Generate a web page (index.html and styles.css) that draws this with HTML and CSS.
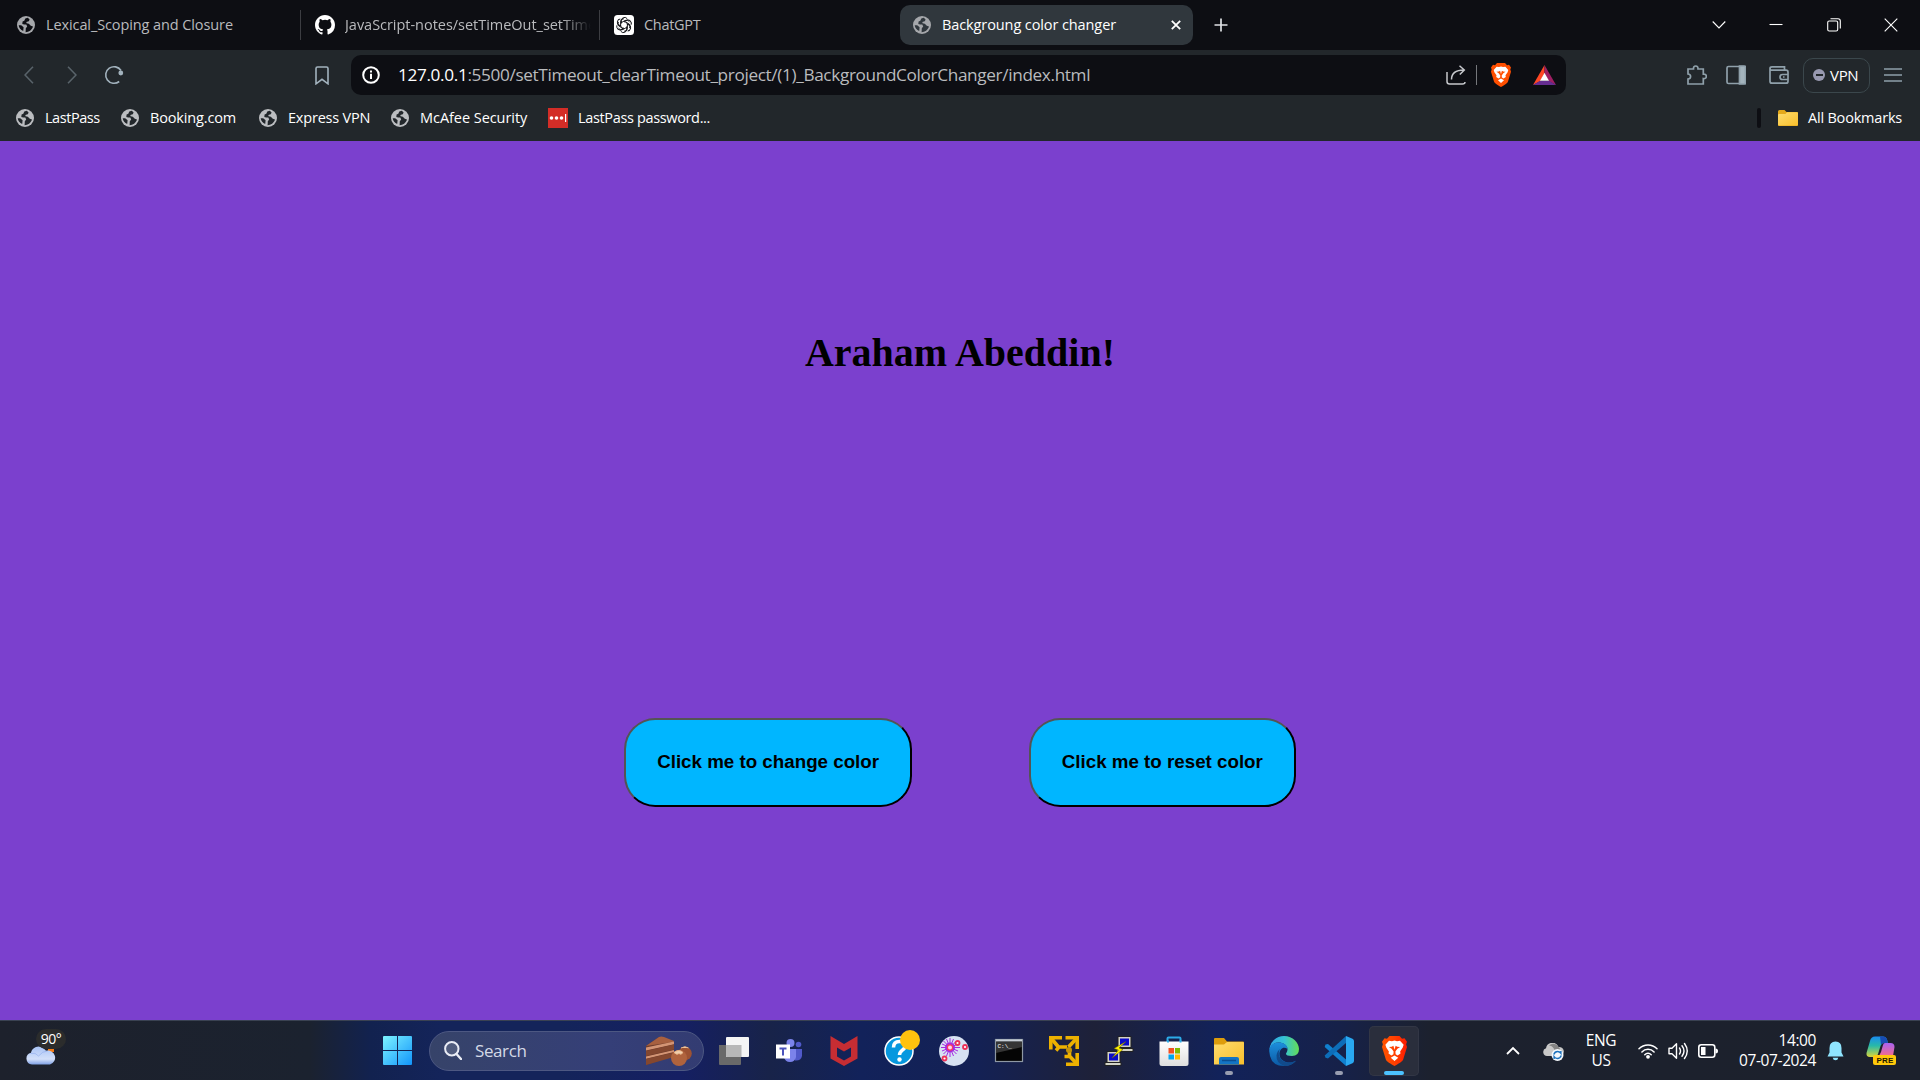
FILE: index.html
```
<!DOCTYPE html>
<html lang="en">
<head>
<meta charset="utf-8">
<title>Backgroung color changer</title>
<link rel="stylesheet" href="styles.css">
</head>
<body>
<svg class="defs" width="0" height="0" aria-hidden="true">
  <defs>
    <linearGradient id="gWin" x1="0" y1="0" x2="1" y2="1"><stop offset="0" stop-color="#7df3ff"/><stop offset="1" stop-color="#1295fb"/></linearGradient>
    <linearGradient id="gCloud" x1="0" y1="0" x2="0" y2="1"><stop offset="0" stop-color="#a9c3f5"/><stop offset=".7" stop-color="#d3e0fa"/><stop offset="1" stop-color="#7fa0e4"/></linearGradient>
    <linearGradient id="gFold" x1="0" y1="0" x2="1" y2="1"><stop offset="0" stop-color="#ffdc6e"/><stop offset="1" stop-color="#f8bf2c"/></linearGradient>
    <linearGradient id="gEdge" x1="0" y1="0" x2="1" y2="0"><stop offset="0" stop-color="#2fa5e4"/><stop offset=".5" stop-color="#35c1d6"/><stop offset="1" stop-color="#64dd55"/></linearGradient>
    <linearGradient id="gEdge2" x1="0" y1="0" x2="0" y2="1"><stop offset="0" stop-color="#1c8fdc"/><stop offset="1" stop-color="#0c59a4"/></linearGradient>
    <linearGradient id="gBrave" x1="0" y1="0" x2="1" y2="0"><stop offset="0" stop-color="#ff5500"/><stop offset=".5" stop-color="#ff4000"/><stop offset="1" stop-color="#ff1a00"/></linearGradient>
    <linearGradient id="gStore" x1="0" y1="0" x2="0" y2="1"><stop offset="0" stop-color="#fff"/><stop offset="1" stop-color="#dedede"/></linearGradient>
    <linearGradient id="gCopA" x1="0" y1="0" x2="0" y2="1"><stop offset="0" stop-color="#1a8cf0"/><stop offset=".45" stop-color="#27b9a8"/><stop offset="1" stop-color="#d9d63a"/></linearGradient>
    <linearGradient id="gCopB" x1="0" y1="0" x2="0" y2="1"><stop offset="0" stop-color="#a862f2"/><stop offset="1" stop-color="#f46d8c"/></linearGradient>
    <symbol id="globe" viewBox="0 0 18 18">
      <circle cx="9" cy="9" r="9" fill="currentColor"/>
      <path d="M10.800 1.800 8.300 2.600 7.300 4.800 5.600 5.600 5.300 8 7.200 8.600 9.300 8.500 10.200 10.500 8.800 12.300 8.600 16.200C11.500 16.300 15 14 16 10.500L13.800 9.800 11.800 7.700 9.600 7.300 9.300 6 11.800 5.300 12.600 3.400Z" fill="var(--hole)"/>
      <path d="M1.700 9.200H4.200L6.600 11.200 6.200 14.900A7.400 7.400 0 0 1 1.700 9.200Z" fill="var(--hole)"/>
    </symbol>
    <symbol id="brave" viewBox="0 0 20 24">
      <path d="M6 0h8l2 2.200 2-.4L20 4.600l-.7 2 .7 2.200-3 9.700c-.5 1.500-1.500 2.200-7 5.500-5.500-3.300-6.500-4-7-5.500L0 8.800l.7-2.200-.7-2L2 1.800l2 .4Z"/>
      <path fill="#fff" d="M5.600 3.700 8 4.100 10 3.600 12 4.100 14.400 3.700 17.300 7 16.600 9.200 14.500 12.300 14.800 13.900 12.500 15.500 10.900 14.600 10.700 12.400 12.300 10.200 14.500 8.800 12.200 8.500 10.900 7.700 10 11 9.100 7.700 7.800 8.500 5.500 8.800 7.700 10.200 9.300 12.400 9.100 14.600 7.500 15.500 5.200 13.900 5.500 12.300 3.400 9.200 2.700 7ZM10 15.500 13 17.300 10 19.900 7 17.300Z"/>
    </symbol>
  </defs>
</svg>

<header class="tabs">
  <div class="tab first"><svg class="fav"><use href="#globe"/></svg><span class="t1">Lexical_Scoping and Closure</span></div>
  <div class="tab second">
    <svg class="fav big" viewBox="0 0 16 16"><path fill="#fff" d="M8 0C3.580 0 0 3.580 0 8c0 3.540 2.290 6.530 5.470 7.590.4.070.55-.17.55-.38v-1.490c-2.010.37-2.530-.49-2.690-.94-.09-.23-.48-.94-.82-1.130-.28-.15-.68-.52-.01-.53.63-.01 1.080.58 1.230.82.72 1.210 1.870.87 2.330.66.070-.52.28-.87.51-1.070-1.780-.2-3.640-.89-3.640-3.950 0-.87.31-1.590.82-2.150-.08-.2-.36-1.020.08-2.120 0 0 .67-.21 2.200.82a7.600 7.600 0 0 1 4 0c1.530-1.040 2.200-.82 2.200-.82.44 1.100.16 1.920.08 2.120.51.56.82 1.270.82 2.150 0 3.070-1.870 3.750-3.650 3.950.29.25.54.73.54 1.480v2.200c0 .21.15.46.55.38A8 8 0 0 0 16 8c0-4.420-3.580-8-8-8Z"/></svg>
    <span class="t2">JavaScript-notes/setTimeOut_setTime</span>
  </div>
  <div class="tab third">
    <svg class="fav big" viewBox="0 0 20 20"><rect width="20" height="20" rx="3.500" fill="#fff"/><g fill="none" stroke="#15161a" stroke-width="1"><path id="pt" d="M7.400 8.500V5.600a3.200 3.200 0 0 1 5.900-1.700M7.400 7.600l3.600-2.100a3.200 3.200 0 0 1 4.400 1.300"/><use href="#pt" transform="rotate(60 10 10)"/><use href="#pt" transform="rotate(120 10 10)"/><use href="#pt" transform="rotate(180 10 10)"/><use href="#pt" transform="rotate(240 10 10)"/><use href="#pt" transform="rotate(300 10 10)"/></g></svg>
    <span class="t3">ChatGPT</span>
  </div>
  <div class="tab active"><svg class="fav"><use href="#globe"/></svg><span class="t4">Backgroung color changer</span>
    <svg class="x" viewBox="0 0 10 10"><path d="M.8.8 9.200 9.200M9.200.8.8 9.200" stroke="#fff" stroke-width="1.800"/></svg></div>
  <svg class="plus" viewBox="0 0 14 14"><path d="M7 .5v13M.5 7h13" stroke="#dfe1e5" stroke-width="1.700"/></svg>
  <div class="wincontrols">
    <svg viewBox="0 0 14 14"><path d="M.7 3.500 7 10 13.300 3.500"/></svg>
    <svg viewBox="0 0 14 14"><path d="M.5 6.500h13"/></svg>
    <svg viewBox="0 0 14 14"><rect x=".7" y="3" width="10" height="10" rx="1.500"/><path d="M3.500.8H11a2.300 2.300 0 0 1 2.300 2.300v7.400"/></svg>
    <svg viewBox="0 0 14 14"><path d="M.7.7 13.300 13.300M13.300.7.7 13.300"/></svg>
  </div>
</header>

<nav class="toolbar">
  <div class="navicons">
    <svg class="dim" viewBox="0 0 10 18"><path d="M9 .8 1 9l8 8.200"/></svg>
    <svg class="dim" viewBox="0 0 10 18"><path d="M1 .8 9 9l-8 8.200"/></svg>
    <svg class="reload" viewBox="0 0 20 20"><path d="M15.200 16.500A8.300 8.300 0 1 1 17 5.500"/><circle cx="16.800" cy="8" r="2.400" fill="#a2b2bd" stroke="none"/></svg>
    <svg class="bm" viewBox="0 0 14 19"><path d="M1 2.500Q1 1 2.500 1h9Q13 1 13 2.500v15.300l-6-4.500-6 4.500Z"/></svg>
  </div>
  <div class="url">
    <svg class="info" viewBox="0 0 18 18"><circle cx="9" cy="9" r="7.800" fill="none" stroke="#fff" stroke-width="2"/><path d="M9 7.700v5.200M9 4.500v2" stroke="#fff" stroke-width="2"/></svg>
    <span class="address"><b>127.0.0.1</b>:5500/setTimeout_clearTimeout_project/(1)_BackgroundColorChanger/index.html</span>
    <svg class="share" viewBox="0 0 20 20"><path d="M1 7v9.500Q1 19 3.500 19h13q2.500 0 2.500-2M5.500 14.500C5.500 8 10 5 18 5M13.500.8 18.300 5l-4.500 4.500" fill="none" stroke="#c6c8cc" stroke-width="1.500"/></svg>
    <i class="bar"></i>
    <svg class="lion" fill="#ff4f00"><use href="#brave"/></svg>
    <svg class="bat" viewBox="0 0 23 20"><path d="M11.500 0 0 20l7.500-4 4-8Z" fill="#ff4724"/><path d="M11.500 0 23 20l-7.500-4-4-8Z" fill="#9e1f63"/><path d="M0 20h23l-7-4.300H7Z" fill="#662d91"/><path d="m11.500 7.800 4.500 8H7Z" fill="#fff"/></svg>
  </div>
  <div class="ext">
    <svg viewBox="0 0 20 20"><path d="M1 4h5.500Q6.300 1 8.700 1T11 4h5.300v5.200q3-.2 3 2.200t-3 2.100V19H1v-5q2.600-.2 2.600-2.500T1 9Z"/></svg>
    <svg viewBox="0 0 20 20"><rect x="1" y="1.500" width="18" height="17" rx="1.500"/><path d="M13.500 1h5q1 0 1 1v16q0 1-1 1h-5Z" fill="#a3b3bc"/></svg>
    <svg viewBox="0 0 20 20"><path d="M1 3.500Q1 1.800 3 1.800h12.500v3M1 3.500Q1 5.200 3 5.200h14q2 0 2 2v9q0 2-2 2H3q-2 0-2-2ZM19 9.500h-5.500a2.500 2.500 0 0 0 0 5H19M14 12h1.500"/></svg>
    <div class="vpn"><i></i><span>VPN</span></div>
    <svg class="menu" viewBox="0 0 18 14"><path d="M0 1h18M0 7h18M0 13h18"/></svg>
  </div>
</nav>

<nav class="bookmarks">
  <div class="b b1"><svg class="fav"><use href="#globe"/></svg><span>LastPass</span></div>
  <div class="b b2"><svg class="fav"><use href="#globe"/></svg><span>Booking.com</span></div>
  <div class="b b3"><svg class="fav"><use href="#globe"/></svg><span>Express VPN</span></div>
  <div class="b b4"><svg class="fav"><use href="#globe"/></svg><span>McAfee Security</span></div>
  <div class="b b5"><svg class="fav big" viewBox="0 0 20 20"><path fill="#d32d27" d="M0 0h20v20H0z"/><g fill="#fff"><circle cx="3.500" cy="10" r="1.800"/><circle cx="8.500" cy="10" r="1.800"/><circle cx="13.500" cy="10" r="1.800"/><path d="M17 6h1.200v8H17z"/></g></svg><span>LastPass password...</span></div>
  <div class="all"><i></i><svg viewBox="0 0 20 16"><path d="M0 1.500Q0 0 1.500 0h5l2 2H19q1 0 1 1v12q0 1-1 1H1q-1 0-1-1Z" fill="#e5a91a"/><path d="M1 4h6.500L9 2.300h10q1 0 1 1V14.500q0 1-1 1H1q-1 0-1-1V5q0-1 1-1Z" fill="url(#gFold)"/></svg><span>All Bookmarks</span></div>
</nav>

<main class="page">
  <h1>Araham Abeddin!</h1>
  <div class="buttons">
    <button type="button">Click me to change color</button>
    <button type="button">Click me to reset color</button>
  </div>
</main>

<footer class="taskbar">
  <div class="weather">
    <svg viewBox="0 0 30 20"><path d="M22 2h6v5h-6Z" fill="#f57b16"/><path d="M6 19.500a6 6 0 0 1-1-11.800A7.500 7.500 0 0 1 17.500 3.500Q19.500 5 20 5.800a7 7 0 1 1 4 13.700Z" fill="url(#gCloud)"/><path d="M4.500 8.500q5-1.500 8 2.500 4-5 9-5" fill="none" stroke="#8facec" stroke-width="1" opacity=".6"/></svg>
    <span>90°</span>
  </div>
  <div class="dock">
    <svg class="start" viewBox="0 0 29 29"><path fill="url(#gWin)" d="M0 1q0-1 1-1h13v14H0ZM15 0h13q1 0 1 1v13H15ZM0 15h14v14H1q-1 0-1-1ZM15 15h14v13q0 1-1 1H15Z"/></svg>
    <div class="search">
      <svg class="mag" viewBox="0 0 18 19"><circle cx="7.800" cy="7.800" r="6.700" fill="#ffffff22" stroke="#e9ecf5" stroke-width="2"/><path d="m12.500 13 4.500 5" stroke="#e9ecf5" stroke-width="2.400" stroke-linecap="round"/></svg>
      <span>Search</span>
      <svg class="cake" viewBox="0 0 46 30"><path d="M0 10 13 1l15 4v15L0 29Z" fill="#6f3c2b"/><path d="M0 10 13 1q2-1 5 0l10 4-1 1Z" fill="#a8603f"/><path d="M0 11.500 28 5.500v2.800L0 14.500ZM0 20.500l28-6.500v2L0 22.700Z" fill="#d39474"/><path d="M0 15v5l28-6.500v-5ZM0 23v6l28-8v-4.500Z" fill="#84472f"/><circle cx="39" cy="17.500" r="6.800" fill="#9d5232"/><circle cx="33" cy="22" r="8" fill="#b0633d"/><path d="M28 16.500q5-4 9 0-2 3-4 1-2 2-5-1ZM35 12q4-2.500 7.500 0" fill="#f0cfad" stroke="#e9b68a"/></svg>
    </div>
    <div class="apps">
      <div><svg viewBox="0 0 30 30"><path d="M0 9h22v19q0 1-1 1H1q-1 0-1-1Z" fill="#696969"/><path d="M8 1h21q1 0 1 1v18q0 1-1 1H8q-1 0-1-1V2q0-1 1-1Z" fill="#f5f5f5"/><path d="M7 9h15.500v12H8q-1 0-1-1Z" fill="#b8b8b8"/></svg></div>
      <div><svg viewBox="0 0 30 30"><circle cx="16.500" cy="7" r="4" fill="#7b83eb"/><circle cx="24.500" cy="8.500" r="2.800" fill="#5059c9"/><path d="M21 13h7v7q-1 5-7 4.500Z" fill="#5059c9"/><path d="M10 13h12v8q-1 5-6 5t-6-5Z" fill="#7b83eb"/><rect x="2" y="8.500" width="14" height="14" fill="#fff"/><path d="M5.500 11.500h7v2H10v6H8v-6H5.500Z" fill="#4b53bc"/></svg></div>
      <div><svg viewBox="0 0 30 30"><path d="m1.500 0 13.500 8L28.500 0v22.500L15 30 1.500 22.500ZM8 11.500v9l7 4 7-4v-9l-7 4Z" fill="#c62d33" fill-rule="evenodd"/></svg></div>
      <div class="help"><svg viewBox="0 0 30 30"><circle cx="15" cy="15" r="14" fill="#0798df" stroke="#fff" stroke-width="1.500"/><path d="M9.500 11.500q0-6 6-6c5 0 6.500 3.500 5 6.500-1.500 2.500-5 2.800-5 7" fill="none" stroke="#fff" stroke-width="3.500"/><circle cx="15.500" cy="23.500" r="2.200" fill="#fff"/></svg><i></i></div>
      <div><svg viewBox="0 0 30 30"><circle cx="15" cy="15" r="15" fill="#d7e2f2"/><path d="M11 2v19M2 11.500h19M4.500 5l13 13M17.500 5l-13 13M7.500 3l7 17M14.500 3l-7 17M3 8l16 7M3 15l16-7" stroke="#a42be0" stroke-width="1"/><circle cx="11" cy="11.500" r="5" fill="#a42be0"/><circle cx="11" cy="11.500" r="2.600" fill="#fbd6ec" stroke="#ff385c" stroke-width="1.200"/><g fill="#fff" stroke="#ed3157" stroke-width="1.800"><circle cx="18.500" cy="7" r="2"/><circle cx="26" cy="11" r="2"/><circle cx="5.500" cy="22.500" r="2"/></g></svg></div>
      <div><svg viewBox="0 0 30 30"><rect x="1.500" y="3.500" width="27" height="22" fill="#050505" stroke="#8e98a4" stroke-width="1.200"/><path d="M2 4.500h26" stroke="#c9d0d8" stroke-width="2"/><path d="M2 6h26v5L2 17Z" fill="#353535"/><text x="3.500" y="12" font-family="Liberation Mono" font-size="6" fill="#fff">C:\_</text></svg></div>
      <div><svg viewBox="0 0 30 30"><g fill="none" stroke="#edb100" stroke-width="3.600"><path d="M1.800 13.500V1.800H13M16.500 1.800h11.700V13M28.200 17v11.200H17"/><path d="m2 2 7 8.500M28 2l-8.500 9M28 28l-8-8.500M7 14.500l3-3.500h8M20.500 14v6.500H15.500"/></g><circle cx="20" cy="14" r="3" fill="#c3930a"/></svg></div>
      <div><svg viewBox="0 0 30 30"><g stroke="#222" fill="#d2d2c6"><path d="M14 .5h13v11H14Z"/><path d="M13 12.500h16v3H13Z"/><path d="M3 15.500h13v11H3Z"/><path d="M1 26.500h16v3H1Z"/></g><path d="M16 2.500h9v7h-9ZM5 17.500h9v7H5Z" fill="#0a0aca"/><path d="M22 5.500 10 12.500l4.500 1.500L8 22l11-8.500-4-1.500Z" fill="#fff200" stroke="#665c00" stroke-width=".5"/></svg></div>
      <div><svg viewBox="0 0 30 30"><path d="M8.500 7V2.500q0-1 1-1h11q1 0 1 1V7" fill="none" stroke="#2cabe8" stroke-width="2"/><path d="M.5 5.500h29v22q0 2.500-2.500 2.500H3Q.5 30 .5 27.500Z" fill="url(#gStore)"/><path d="M8 5.500h2M20.500 5.500h2" stroke="#2cabe8" stroke-width="2"/><path d="M9.500 12H15v5.500H9.500Z" fill="#f25022"/><path d="M16 12h5v5.500h-5Z" fill="#7fba00"/><path d="M9.500 18.500H15v5H9.500Z" fill="#00a4ef"/><path d="M16 18.500h5v5h-5Z" fill="#ffb900"/></svg></div>
      <div class="run"><svg viewBox="0 0 30 30"><path d="M0 3q0-1 1-1h9l3 3.500H29q1 0 1 1V28H0Z" fill="#dd9c0c"/><path d="M0 8.500h10L13 6h16q1 0 1 1v21.500H0Z" fill="url(#gFold)"/><path d="M5 28.500V23q0-2 2-2h16q2 0 2 2v5.500Z" fill="#1475c4"/><path d="M8 24.500h14" stroke="#0b4f92" stroke-width="1.500"/></svg></div>
      <div><svg viewBox="0 0 30 30"><path d="M.3 14A14.800 14.800 0 0 1 15 0C24 0 30 7 30 13q0 7-7 7-6 0-6-2.200c0-1 1.500-1.800 1.500-4.500C18.500 9 14 6.500 9.500 6.500Q3 6.500.3 14Z" fill="url(#gEdge)"/><path d="M.2 15C.5 9 5 6.500 9.500 6.500c5 0 9 2.500 9 6.500-4-3-8 0-8 5 0 6 6 9 11 8.500 2.500-.2 4-1 5.500-1.800Q22.500 30 15 30 1 30 .2 15Z" fill="url(#gEdge2)"/><path d="M11 13c-3 4-.5 11 5 13 4 1.300 8 .3 11-1.300Q22.500 30 15.500 30 7 27 7.500 19.500 8 15 11 13Z" fill="#114a8b"/></svg></div>
      <div class="run"><svg viewBox="0 0 30 30"><path d="M1.500 8.500 4 8l18 15.500V30L.7 11Z" fill="#1080cf"/><path d="M.7 19.500 22 0v7L4 22.500l-2.500-.7Z" fill="#0d6db8"/><path d="m22 0 6.500 2.800Q30 3.500 30 5v20q0 1.500-1.500 2.200L22 30Z" fill="#29a8f1"/></svg></div>
      <div class="run current"><svg class="lionbig" viewBox="0 0 20 24" fill="url(#gBrave)"><use href="#brave" width="20" height="24"/></svg></div>
    </div>
  </div>
  <div class="tray">
    <svg class="up" viewBox="0 0 14 9"><path d="m1 8 6-6 6 6" fill="none" stroke="#fff" stroke-width="1.800"/></svg>
    <svg class="sync" viewBox="0 0 21 18"><path d="M4 13a4 4 0 0 1-1-7.800A6.500 6.500 0 0 1 15.500 4 4.500 4.500 0 0 1 17 13Z" fill="#c8c8c8"/><path d="M6 2.500a6 6 0 0 1 9.500 1.500q2 .5 1.500 5H12Q11 3 6 2.500Z" fill="#858585"/><circle cx="14.500" cy="12" r="6" fill="#f4f8fc"/><path d="M10.800 11.500q1-3 3.800-3 2 0 3.300 1.800V8M18.200 12.500q-1 3-3.800 3-2 0-3.300-1.800V16" fill="none" stroke="#1b71bd" stroke-width="1.400"/></svg>
    <div class="lang">ENG<br>US</div>
    <svg class="wifi" viewBox="0 0 20 16"><g fill="none" stroke="#fff" stroke-width="1.500" stroke-linecap="round"><path d="M1 5.800a12.500 12.500 0 0 1 18 0M3.900 8.900a8.500 8.500 0 0 1 12.200 0M6.800 11.700a4.500 4.500 0 0 1 6.400 0"/></g><circle cx="10" cy="13.800" r="1.900" fill="#fff"/></svg>
    <svg class="vol" viewBox="0 0 20 18"><path d="M1 6.200h3L8.500 1.800v14.400L4 11.800H1ZM11.500 6q2 3 0 6M14 3.800q4 5.200 0 10.400M16.500 1.500q5.500 7.500 0 15" fill="none" stroke="#fff" stroke-width="1.400" stroke-linejoin="round" stroke-linecap="round"/></svg>
    <svg class="batt" viewBox="0 0 20 14"><rect x=".8" y=".8" width="16" height="12.400" rx="2.500" fill="none" stroke="#fff" stroke-width="1.600"/><path d="M3 3h4.500v8H3ZM17.500 4.500Q20 4.500 20 7t-2.500 2.500Z" fill="#fff"/></svg>
    <div class="clock">14:00<br>07-07-2024</div>
    <svg class="bell" viewBox="0 0 17 20"><path d="M8.500.5q6 0 6 6.500v4.500l2 4H.5l2-4V7q0-6.500 6-6.500ZM5.700 16.800h5.600q-.5 2.500-2.800 2.500t-2.800-2.500Z" fill="#8fe5ff"/></svg>
    <svg class="copilot" viewBox="0 0 30 29"><path d="M4 5q1-4.500 5-4.500h8q3 0 4 3l1 3.500h-4q-2.500 0-3.500 3l-2.500 8Q11 21 8 21H4q-4 0-3.500-4Z" fill="url(#gCopA)"/><path d="M14 .5h3q3 0 4 3l1 3.500h-4q-2 0-3 2Z" fill="#174cb4"/><path d="M19 7h5.500q4 0 4 4L27 20H12q2-1 3-4l2-7Q17.500 7 19 7Z" fill="url(#gCopB)"/><rect x="7" y="19" width="23" height="10" rx="2" fill="#ffc80a"/><text x="10.500" y="27" font-family="Liberation Sans" font-weight="700" font-size="8" letter-spacing=".2" fill="#201800">PRE</text></svg>
  </div>
</footer>
</body>
</html>
```
FILE: styles.css
```
* { box-sizing: border-box; }
html, body { margin: 0; height: 100%; }
body {
  display: flex; flex-direction: column; height: 1080px; overflow: hidden;
  font-family: "Open Sans", "Noto Sans", sans-serif; color: #fff; background: #7b40ce;
}
svg { display: block; flex: none; }
.defs { position: absolute; }
span { white-space: nowrap; }

/* tab strip */
.tabs { flex: none; height: 50px; background: #0d0e13; display: flex; align-items: center; font-size: 14.500px; color: #b9babd; --hole: #0d0e13; }
.tab { display: flex; align-items: center; height: 30px; line-height: 30px; }
.fav { width: 18px; height: 18px; color: #a5a7ab; }
.fav.big { width: 20px; height: 20px; }
.first { width: 301px; padding-left: 17px; gap: 11px; border-right: 1px solid #3c3d42; }
.second { width: 299px; padding: 0 8px 0 14px; gap: 10px; border-right: 1px solid #3c3d42; }
.t2 { width: 246px; overflow: hidden; -webkit-mask-image: linear-gradient(90deg, #000 88%, transparent); mask-image: linear-gradient(90deg, #000 88%, transparent); }
.third { width: 300px; padding-left: 14px; gap: 10px; }
.active { width: 293px; height: 40px; padding: 0 12px 0 13px; gap: 11px; border-radius: 10px; background: #30373d; color: #fff; --hole: #30373d; }
.x { width: 10px; height: 10px; margin-left: auto; }
.plus { width: 14px; height: 14px; margin-left: 21px; }
.t1, .t4 { letter-spacing: -.1px; }
.t2 { letter-spacing: -.03px; }
.t3 { letter-spacing: -.3px; }
.wincontrols { margin-left: auto; margin-right: 22px; display: flex; gap: 43.500px; }
.wincontrols svg { width: 14px; height: 14px; fill: none; stroke: #fff; stroke-width: 1.100; }

/* address row */
.toolbar { flex: none; height: 50px; background: #22272b; display: flex; align-items: center; }
.navicons { width: 351px; padding-left: 24px; display: flex; align-items: center; }
.navicons svg { fill: none; stroke: #a2b2bd; stroke-width: 1.600; width: 10px; height: 18px; }
.navicons .dim { stroke: #59636a; margin-right: 33px; }
.navicons .dim + .dim { margin-right: 27px; }
.navicons .reload { width: 20px; height: 20px; }
.navicons .bm { width: 14px; height: 19px; margin-left: 191px; }
.url { width: 1215px; height: 40px; border-radius: 10px; background: #0d0e13; display: flex; align-items: center; padding: 0 10px 0 11px; }
.info { width: 18px; height: 18px; margin-right: 18px; }
.address { flex: 1; font-size: 17.200px; letter-spacing: -.35px; color: #babbbe; line-height: 40px; }
.address b { font-weight: 400; color: #fff; }
.share { width: 20px; height: 20px; }
.bar { width: 1px; height: 20px; margin: 0 14px 0 10px; background: #75777b; }
.lion { width: 20px; height: 24px; }
.bat { width: 23px; height: 20px; margin-left: 22px; }
.ext { flex: 1; padding: 0 18px 0 121px; display: flex; align-items: center; }
.ext > svg { width: 20px; height: 20px; margin-right: 19px; fill: none; stroke: #8fa0aa; stroke-width: 1.700; }
.ext > svg:nth-of-type(2) { margin-right: 23px; }
.ext > svg:nth-of-type(3) { margin-right: 14px; }
.ext .menu { width: 18px; height: 14px; margin: 0 0 0 auto; }
.vpn { width: 67px; height: 35px; border: 1px solid #3b474c; border-radius: 10px; display: flex; align-items: center; gap: 5px; padding-left: 9px; font-size: 15px; letter-spacing: -.3px; }
.vpn i { width: 12px; height: 12px; border-radius: 50%; background: linear-gradient(#22272b, #22272b) center / 7px 2px no-repeat #9899b0; }

/* bookmarks row */
.bookmarks { flex: none; height: 41px; padding: 0 17px 5px 16px; background: #22272b; display: flex; align-items: center; font-size: 14.500px; letter-spacing: -.15px; --hole: #22272b; }
.bookmarks span { margin-top: -2px; }
.bookmarks .fav { color: #bbbdc0; }
.b { display: flex; align-items: center; gap: 11px; }
.b1 { width: 105px; letter-spacing: -.45px; }
.b2 { width: 138px; }
.b3 { width: 132px; letter-spacing: -.2px; }
.b4 { width: 157px; letter-spacing: -.05px; }
.b5 { gap: 10px; letter-spacing: -.35px; }
.all { margin-left: auto; width: 146px; display: flex; align-items: center; letter-spacing: -.2px; }
.all i { width: 4px; height: 20px; border-radius: 2px; background: #0d0e13; margin-right: 17px; }
.all svg { width: 20px; height: 16px; margin-right: 10px; }

/* document */
.page { flex: 1; min-height: 0; display: flex; flex-direction: column; align-items: center; background: #7b40ce; color: #000; }
h1 { margin: 189px 0 0; font: bold 40px/46px "Liberation Serif", "Times New Roman", serif; }
.buttons { display: flex; gap: 116.200px; margin-top: 342px; }
button { padding: 29.500px 31.250px 31.500px; height: 89px; border: 2px outset #000; border-radius: 31.250px; background: #00b6ff; color: #000; font: bold 18.750px/22px "Liberation Sans", Arial, sans-serif; }

/* taskbar */
.taskbar {
  flex: none; height: 60px; display: flex; align-items: center; border-top: 1px solid #3a4252;
  background: linear-gradient(90deg, #1d212c 0, #1b222f 310px, #12224f 370px, #14245a 440px, #14245a 560px, #151f63 680px, #182349 770px, #12225a 860px, #142154 980px, #1e2138 1095px, #12225a 1220px, #162149 1340px, #1c212e 1430px, #1c212c 100%);
}
.weather { width: 383px; padding-left: 26px; display: flex; position: relative; }
.weather svg { width: 30px; height: 20px; margin-top: 8px; }
.weather span { position: absolute; left: 36px; top: -8px; width: 30px; height: 20px; border-radius: 10px; background: #2b2c2c; font-size: 14px; line-height: 20px; letter-spacing: -.5px; text-align: center; }
.dock { display: flex; align-items: center; width: 1036px; }
.start { width: 29px; height: 29px; }
.search { width: 275px; height: 40px; margin: 0 5px 0 17px; padding: 0 11px 0 14px; border-radius: 20px; border: 1px solid #4d5882; background: linear-gradient(90deg, #364369, #353f78 65%, #333c72); display: flex; align-items: center; }
.mag { width: 18px; height: 19px; margin-right: 13px; }
.search span { font-size: 17px; letter-spacing: -.4px; color: #d4d9e6; }
.cake { width: 46px; height: 30px; margin-left: auto; }
.apps { display: flex; gap: 5px; }
.apps > div { position: relative; width: 50px; height: 50px; border-radius: 5px; display: grid; place-items: center; }
.apps svg { width: 30px; height: 30px; }
.apps .lionbig { width: 25px; }
.help i { position: absolute; left: 26px; top: 4px; width: 20px; height: 20px; border-radius: 50%; background: #ffc20e; }
.run::after { content: ""; position: absolute; left: 21px; bottom: 1px; width: 8px; height: 4px; border-radius: 2px; background: #989db0; }
.apps > .current { background: #2a2e3c; box-shadow: inset 0 0 0 1px #323645; }
.current::after { left: 15px; width: 20px; background: #4cc2ff; }
.tray { flex: 1; padding-left: 87px; display: flex; align-items: center; font-size: 15.500px; line-height: 20px; letter-spacing: -.4px; }
.up { width: 14px; height: 9px; }
.sync { width: 21px; height: 18px; margin: 3px 0 0 23px; }
.lang { width: 38px; margin: -1px 0 0 18px; text-align: center; }
.wifi { width: 20px; height: 16px; margin-left: 18px; }
.vol { width: 20px; height: 18px; margin-left: 10px; }
.batt { width: 20px; height: 14px; margin-left: 10px; }
.clock { width: 98px; margin-top: -2px; text-align: right; }
.bell { width: 17px; height: 20px; margin-left: 11px; }
.copilot { width: 30px; height: 29px; margin-left: 22px; }
```
